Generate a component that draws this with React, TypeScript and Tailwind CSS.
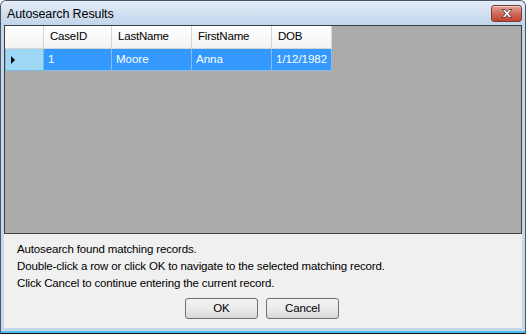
import React from "react";

const font = { fontFamily: "'Liberation Sans', Arial, sans-serif" };

const columns = [
  { key: "caseId", label: "CaseID", width: "w-[68px]" },
  { key: "lastName", label: "LastName", width: "w-[80px]" },
  { key: "firstName", label: "FirstName", width: "w-[80px]" },
  { key: "dob", label: "DOB", width: "w-[60px]" },
];

const rows = [{ caseId: "1", lastName: "Moore", firstName: "Anna", dob: "1/12/1982" }];

function CloseButton() {
  return (
    <div className="w-[31px] h-[17px] rounded-[3px] border border-[#7a3a34] bg-gradient-to-b from-[#e3a399] via-[#d26a5c] to-[#c2432f] flex items-center justify-center shadow-[inset_0_1px_0_rgba(255,255,255,0.5)]">
      <svg width="14" height="11" viewBox="0 0 14 11">
        <path
          d="M2 1.5 L5 1.5 L7 3.8 L9 1.5 L12 1.5 L8.6 5.5 L12 9.5 L9 9.5 L7 7.2 L5 9.5 L2 9.5 L5.4 5.5 Z"
          fill="#ffffff"
          stroke="#5b3a36"
          strokeWidth="0.9"
          strokeLinejoin="round"
        />
      </svg>
    </div>
  );
}

function Grid() {
  return (
    <div className="h-[209px] border border-[#3f3f3f] bg-[#ababab] flex flex-col">
      {/* header row */}
      <div className="flex h-[23px] text-[11.5px] text-black">
        <div className="w-[39px] bg-gradient-to-b from-white to-[#f4f4f4] border-r border-b border-[#d5d5d5]" />
        {columns.map((c) => (
          <div
            key={c.key}
            className={`${c.width} bg-gradient-to-b from-white to-[#f4f4f4] border-r border-b border-[#d5d5d5] flex items-center pl-[6px] tracking-[-0.2px]`}
          >
            {c.label}
          </div>
        ))}
      </div>
      {/* data rows */}
      {rows.map((r, i) => (
        <div key={i} className="flex h-[22px] text-[11.5px]">
          <div className="w-[39px] bg-[#9fd8f5] border border-[#79b8dc] border-t-0 flex items-center pl-[4px]">
            <svg width="6" height="10" viewBox="0 0 6 10">
              <path d="M1 1 L5 5 L1 9 Z" fill="#000" />
            </svg>
          </div>
          {columns.map((c) => (
            <div
              key={c.key}
              className={`${c.width} bg-[#3399ff] border-r border-b border-[#8cbbe6] text-white flex items-center pl-[4px]`}
            >
              {r[c.key as keyof typeof r]}
            </div>
          ))}
        </div>
      ))}
    </div>
  );
}

export default function App() {
  return (
    <div
      style={font}
      className="w-[526px] h-[334px] flex flex-col bg-[#c4d7ed] border border-[#4b5563] border-b-[#111] rounded-t-[6px] overflow-hidden"
    >
      {/* title bar */}
      <div className="h-[24px] flex items-start justify-between bg-gradient-to-b from-[#e4ecf6] to-[#c1d5eb] pl-[6px] pr-[3px]">
        <span className="text-[12.5px] text-black mt-[4px] tracking-[-0.1px]">Autosearch Results</span>
        <div className="mt-[4px]">
          <CloseButton />
        </div>
      </div>

      {/* client */}
      <div className="flex-1 flex flex-col px-[3px] pb-[3px] border-b-2 border-[#4cc2ef]">
        <Grid />
        <div className="flex-1 bg-[#f0f0f0] flex flex-col pl-[13px] pt-[7px] text-[11.5px] text-black tracking-[-0.15px]">
          <p className="h-[17px] leading-[17px]">Autosearch found matching records.</p>
          <p className="h-[17px] leading-[17px]">
            Double-click a row or click OK to navigate to the selected matching record.
          </p>
          <p className="h-[17px] leading-[17px]">Click Cancel to continue entering the current record.</p>
          <div className="flex justify-center gap-[8px] mt-[6px] pr-[15px]">
            <button className="w-[73px] h-[21px] rounded-[3px] border border-[#707070] bg-gradient-to-b from-[#f3f3f3] via-[#ebebeb] to-[#d9d9d9] text-[11.5px] text-black">
              OK
            </button>
            <button className="w-[73px] h-[21px] rounded-[3px] border border-[#707070] bg-gradient-to-b from-[#f3f3f3] via-[#ebebeb] to-[#d9d9d9] text-[11.5px] text-black">
              Cancel
            </button>
          </div>
        </div>
      </div>
    </div>
  );
}
